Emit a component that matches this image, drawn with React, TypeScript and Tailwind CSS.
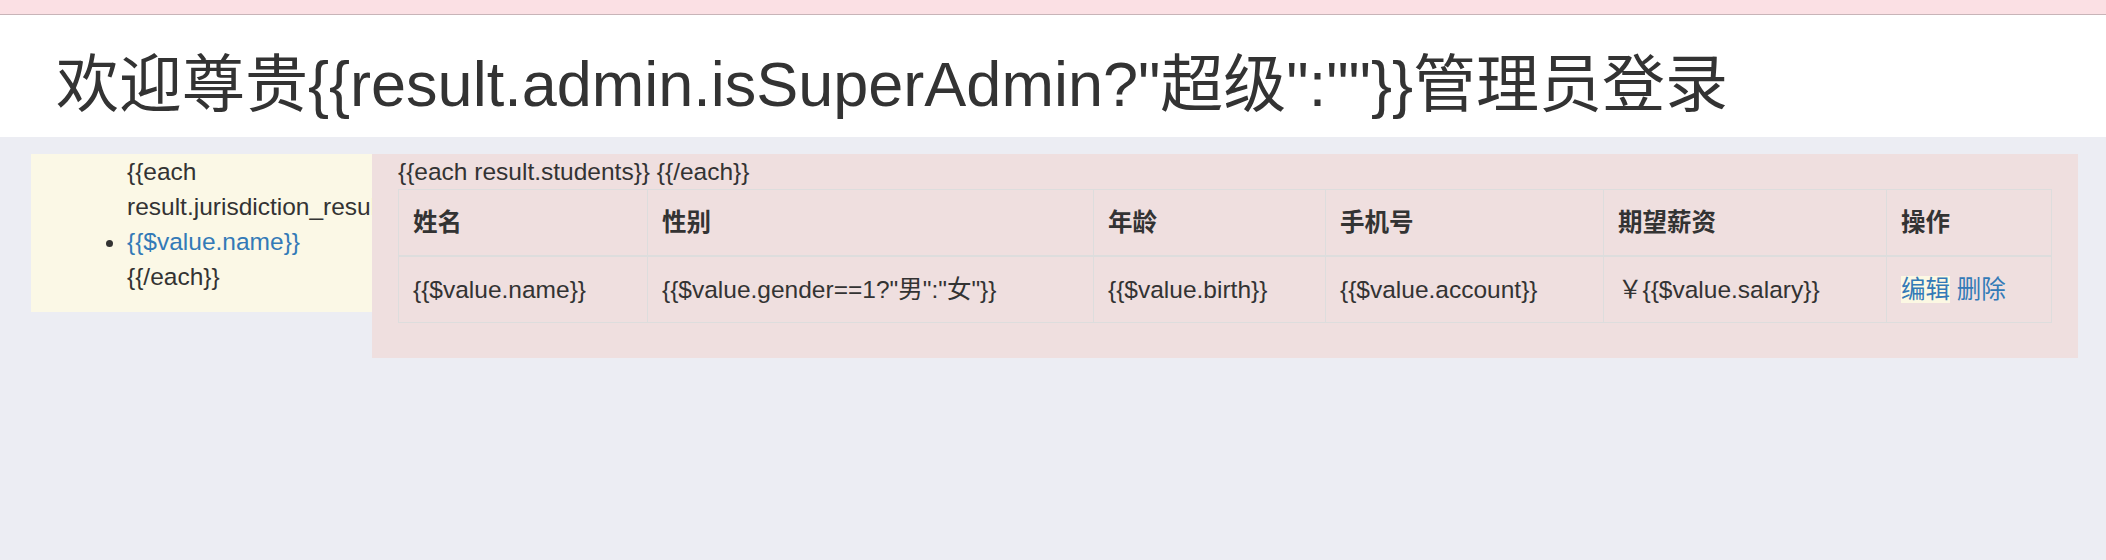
import React from 'react';

const font = "font-['Liberation_Sans','Noto_Sans_CJK_SC',sans-serif]";

const App: React.FC = () => {
  return (
    <div className={`min-h-[560px] bg-[#ecedf3] text-[#333333] text-[24.5px] leading-[35px] ${font}`}>
      <div className="h-[15px] bg-[#fbe0e4] border-b border-[#c8b4b8]" />
      <div className="bg-white pt-[35px] pb-[18px] pl-[56px]">
        <h1 className="text-[63px] leading-[69px] font-normal">
          欢迎尊贵{'{{result.admin.isSuperAdmin?"超级":""}}'}管理员登录
        </h1>
      </div>

      <div className="flex items-start pt-[17px] pl-[31px]">
        <div className="w-[341px] shrink-0 overflow-hidden bg-[#fbf8e6] px-[26px]">
          <ul className="list-disc pl-[70px] mb-[18px]">
            {'{{each result.jurisdiction_result}}'}
            <li>
              <a href="#" className="text-[#337ab7]">{'{{$value.name}}'}</a>
            </li>
            {'{{/each}}'}
          </ul>
        </div>

        <div className="w-[1706px] shrink-0 bg-[#efdfdf] px-[26px] pb-[35px]">
          <div>{'{{each result.students}} {{/each}}'}</div>
          <table className="w-full table-fixed border-collapse border border-[#dddddd] text-left">
            <thead>
              <tr>
                <th className="w-[249px] px-[14px] py-[15px] border border-[#dddddd] border-b-2 align-bottom font-bold">姓名</th>
                <th className="w-[446px] px-[14px] py-[15px] border border-[#dddddd] border-b-2 align-bottom font-bold">性别</th>
                <th className="w-[232px] px-[14px] py-[15px] border border-[#dddddd] border-b-2 align-bottom font-bold">年龄</th>
                <th className="w-[278px] px-[14px] py-[15px] border border-[#dddddd] border-b-2 align-bottom font-bold">手机号</th>
                <th className="w-[283px] px-[14px] py-[15px] border border-[#dddddd] border-b-2 align-bottom font-bold">期望薪资</th>
                <th className="px-[14px] py-[15px] border border-[#dddddd] border-b-2 align-bottom font-bold">操作</th>
              </tr>
            </thead>
            <tbody>
              <tr>
                <td className="px-[14px] py-[15px] border border-[#dddddd] align-top">{'{{$value.name}}'}</td>
                <td className="px-[14px] py-[15px] border border-[#dddddd] align-top">{'{{$value.gender==1?"男":"女"}}'}</td>
                <td className="px-[14px] py-[15px] border border-[#dddddd] align-top">{'{{$value.birth}}'}</td>
                <td className="px-[14px] py-[15px] border border-[#dddddd] align-top">{'{{$value.account}}'}</td>
                <td className="px-[14px] py-[15px] border border-[#dddddd] align-top">￥{'{{$value.salary}}'}</td>
                <td className="px-[14px] py-[15px] border border-[#dddddd] align-top">
                  <a href="#" className="text-[#337ab7] bg-[#fcf8e3]">编辑</a>{' '}
                  <a href="#" className="text-[#337ab7]">删除</a>
                </td>
              </tr>
            </tbody>
          </table>
        </div>
      </div>
    </div>
  );
};

export default App;
